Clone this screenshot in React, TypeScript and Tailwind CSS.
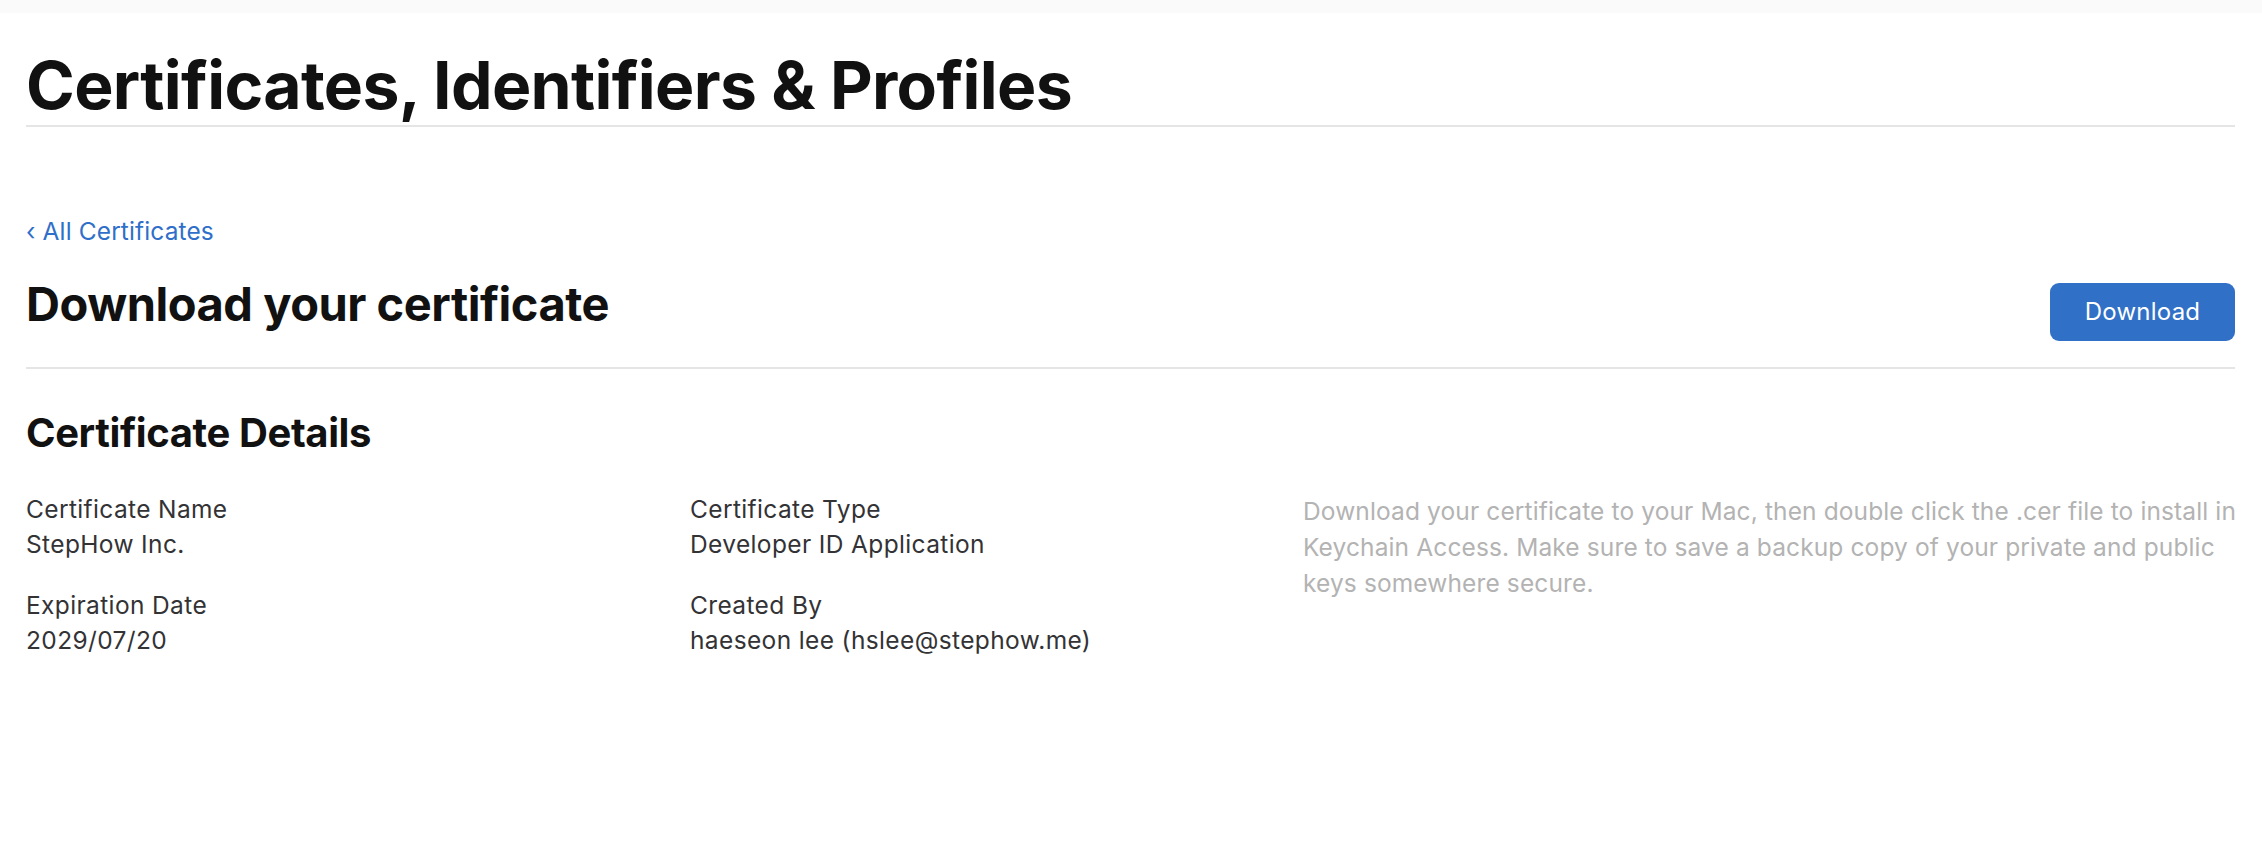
export default function App() {
  return (
    <div className="min-h-screen bg-white font-['Inter','Noto_Sans',sans-serif] text-[#1d1d1f]">
      {/* top strip */}
      <div className="h-[13px] bg-[#fafafa]" />

      <div className="px-[26px] pr-[27px]">
        {/* Page title */}
        <div className="pt-[33px] border-b-2 border-[#e5e5e5]">
          <h1 className="text-[66px] leading-[79px] font-bold tracking-[-0.01em] text-[#111111]">
            Certificates, Identifiers &amp; Profiles
          </h1>
        </div>

        {/* Back link */}
        <div className="pt-[86px]">
          <a href="#" className="text-[24.5px] leading-[36px] tracking-[0.005em] text-[#2f6fc9]">
            ‹ All Certificates
          </a>
        </div>

        {/* Section header */}
        <div className="flex items-start justify-between pt-[22px] pb-[26px] border-b-2 border-[#e5e5e5]">
          <h2 className="mt-[4px] mb-[-4px] text-[47px] leading-[58px] font-bold tracking-[-0.01em] text-[#111111]">
            Download your certificate
          </h2>
          <button className="mt-[12px] h-[58px] w-[185px] rounded-[9px] bg-[#3070c6] text-[24px] tracking-[0.01em] text-white">
            Download
          </button>
        </div>

        {/* Details */}
        <h3 className="pt-[40px] text-[40px] leading-[48px] font-bold tracking-[-0.01em] text-[#111111]">
          Certificate Details
        </h3>

        <div className="flex pt-[35px] text-[24.5px] leading-[35px] tracking-[0.015em] text-[#333336]">
          <div className="w-[664px] flex flex-col gap-[26px]">
            <div>
              <div>Certificate Name</div>
              <div>StepHow Inc.</div>
            </div>
            <div>
              <div>Expiration Date</div>
              <div>2029/07/20</div>
            </div>
          </div>
          <div className="w-[613px] flex flex-col gap-[26px]">
            <div>
              <div>Certificate Type</div>
              <div>Developer ID Application</div>
            </div>
            <div>
              <div>Created By</div>
              <div>haeseon lee (hslee@stephow.me)</div>
            </div>
          </div>
          <p className="flex-1 mt-[1px] mr-[-27px] leading-[36px] tracking-[0.005em] text-[#b3b3b3]">
            Download your certificate to your Mac, then double click the .cer file to install in Keychain Access.
            Make sure to save a backup copy of your private and public keys somewhere secure.
          </p>
        </div>
      </div>
    </div>
  )
}
